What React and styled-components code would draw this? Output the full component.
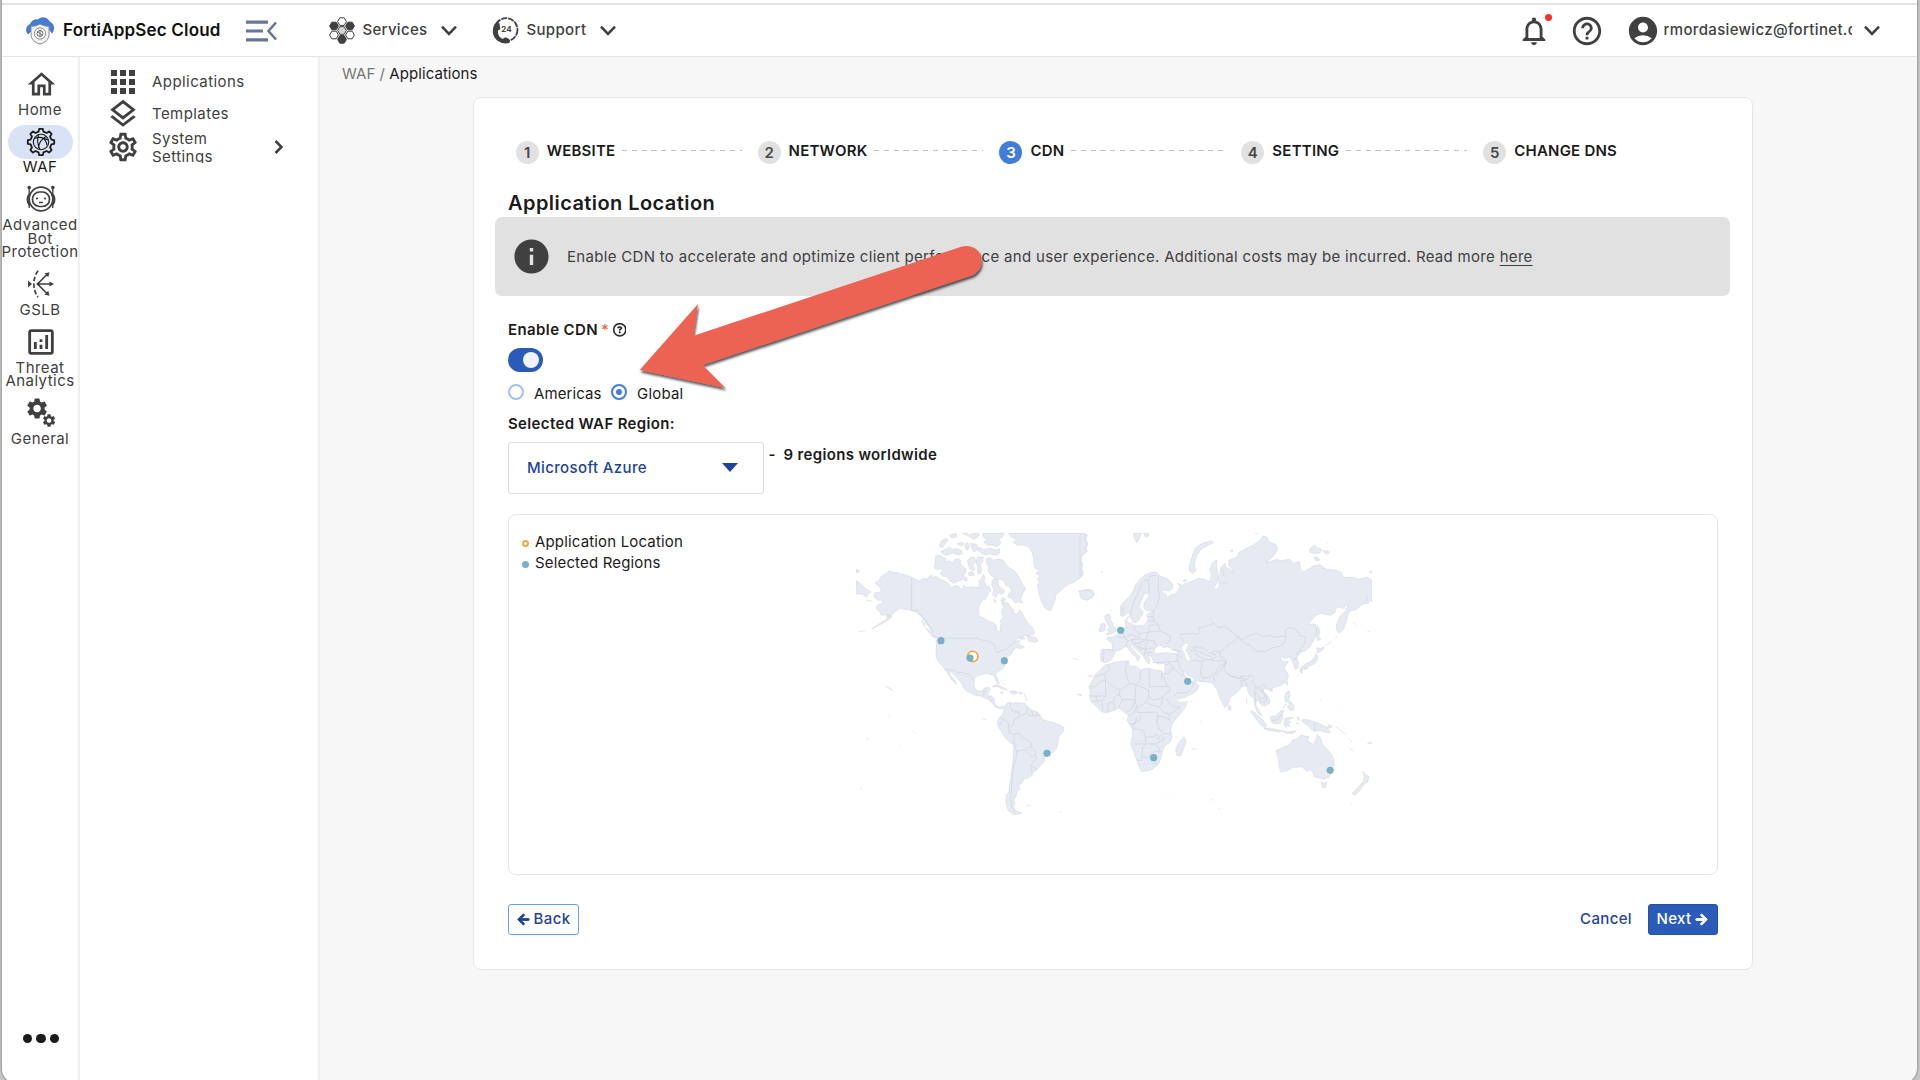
import React from "react";
import styled, { createGlobalStyle } from "styled-components";
import {
  MdOutlineHome,
  MdApps,
  MdOutlineLayers,
  MdOutlineSettings,
  MdSettings,
  MdOutlineAnalytics,
  MdNotificationsNone,
  MdHelpOutline,
  MdAccountCircle,
  MdInfo,
} from "react-icons/md";
import { FaArrowLeft, FaArrowRight } from "react-icons/fa";
import { FaRegCircleQuestion } from "react-icons/fa6";

const GlobalStyle = createGlobalStyle`
  *, *::before, *::after { box-sizing: border-box; }
  body {
    margin: 0;
    background: #c6c6c6;
    font-family: Inter, "Liberation Sans", sans-serif;
    font-size: 15px;
    line-height: 20px;
    color: #1b1b1b;
  }
  svg { display: block; flex: none; }
`;

const Screen = styled.div`
  position: relative;
  width: 1920px;
  height: 1080px;
  overflow: hidden;
`;

const Window = styled.div`
  width: 1915px;
  height: 1084px;
  margin-left: 2px;
  display: flex;
  flex-direction: column;
  background: #f7f7f7;
  border-radius: 0 0 16px 16px;
  box-shadow: 0 0 0 1.5px #a8a8a8;
  overflow: hidden;
`;

const TitleStrip = styled.div`
  height: 5px;
  background: #fff;
  border-bottom: 2px solid #e2e2e2;
`;

const Header = styled.header`
  height: 52px;
  display: flex;
  align-items: center;
  background: #fff;
  border-bottom: 1px solid #e4e4e4;
  color: #404040;
`;

const Brand = styled.div`
  display: flex;
  align-items: center;
  width: 320px;
  padding-left: 22px;
`;

const BrandName = styled.span`
  width: 183px;
  margin: -2px 0 0 8px;
  font-size: 17px;
  font-weight: 600;
  letter-spacing: 0.18px;
  color: #111;
`;

const HeaderMenu = styled.div`
  display: flex;
  align-items: center;
  margin-left: ${(p) => p.$offset}px;
`;

const HeaderLabel = styled.span`
  margin: -2px ${(p) => p.$gap}px 0 ${(p) => p.$lead}px;
  font-weight: 500;
  letter-spacing: ${(p) => p.$track}px;
  width: ${(p) => p.$width};
  overflow: hidden;
  white-space: nowrap;
`;

const HeaderTools = styled.div`
  display: flex;
  align-items: center;
  margin-left: auto;
  padding-right: 37px;
`;

const Bell = styled.div`
  position: relative;
  margin-right: 19px;
`;

const BellDot = styled.span`
  position: absolute;
  top: 0;
  right: -1px;
  width: 7px;
  height: 7px;
  border-radius: 50%;
  background: #f0342a;
`;

const Body = styled.div`
  flex: 1;
  display: flex;
`;

const Rail = styled.nav`
  width: 78px;
  padding: 10px 0 0;
  display: flex;
  flex-direction: column;
  gap: 8.5px;
  background: #fff;
  border-right: 2px solid #efefef;
  color: #404040;
`;

const RailItem = styled.div`
  display: flex;
  flex-direction: column;
  align-items: center;
  gap: 1.6px;
  color: ${(p) => (p.$active ? "#1b1b1b" : "#404040")};
`;

const RailIcon = styled.div`
  width: 65px;
  height: 34px;
  padding-left: 2px;
  display: flex;
  align-items: center;
  justify-content: center;
  border-radius: 17px;
  background: ${(p) => (p.$active ? "#d9e3f5" : "transparent")};
`;

const RailLabel = styled.div`
  width: 90px;
  text-align: center;
  line-height: 13.6px;
  letter-spacing: 0.45px;
  white-space: pre-line;
`;

const RailMore = styled.div`
  margin-top: auto;
  display: flex;
  justify-content: center;
  gap: 4.3px;
  padding: 0 0 41px 2px;

  span {
    width: 9.4px;
    height: 9.4px;
    border-radius: 50%;
    background: #1b1b1b;
  }
`;

const SideNav = styled.nav`
  width: 240px;
  padding-top: 7px;
  background: #fff;
  border-right: 2px solid #efefef;
  color: #404040;
`;

const SideItem = styled.div`
  height: 32.8px;
  padding: 0 35px 0 26px;
  display: grid;
  grid-template-columns: 34px 1fr auto;
  column-gap: 12px;
  align-items: center;
  justify-items: start;
`;

const SideIcon = styled.div`
  width: 34px;
  display: flex;
  justify-content: center;
`;

const SideLabel = styled.span`
  width: 100px;
  max-height: 33px;
  overflow: hidden;
  line-height: 17.4px;
  letter-spacing: 0.43px;
  white-space: pre-line;
`;

const Main = styled.main`
  flex: 1;
`;

const Breadcrumb = styled.div`
  padding: 7px 0 0 22px;
  height: 40px;
  letter-spacing: 0.06px;
  color: #757575;

  b {
    font-weight: 400;
    color: #1b1b1b;
  }
`;

const Card = styled.section`
  width: 1279.5px;
  height: 873px;
  margin-left: 153px;
  padding: 43px 34px 0;
  background: #fff;
  border: 1px solid #e5e5e5;
  border-radius: 8px;
`;

const Steps = styled.div`
  display: grid;
  grid-template-columns: repeat(5, 241.9px);
  padding-left: 7.7px;
  height: 50px;
  align-items: start;
`;

const Step = styled.div`
  display: flex;
  align-items: center;
  padding-right: 16px;
`;

const StepNumber = styled.span`
  width: 23px;
  height: 23px;
  margin-right: 8px;
  border-radius: 50%;
  text-align: center;
  line-height: 23px;
  font-weight: 600;
  color: ${(p) => (p.$active ? "#fff" : "#474747")};
  background: ${(p) => (p.$active ? "#437ddc" : "#e1e1e1")};
`;

const StepLabel = styled.span`
  margin-top: -4px;
  font-weight: 600;
  letter-spacing: 0.22px;
  white-space: nowrap;
`;

const StepDash = styled.span`
  flex: 1;
  height: 1.5px;
  margin: -4px 0 0 7px;
  background: repeating-linear-gradient(90deg, #c0c0c0 0 5.2px, transparent 5.2px 9.8px);
`;

const Title = styled.h2`
  margin: 0;
  height: 26px;
  font-size: 20px;
  line-height: 24px;
  font-weight: 600;
  letter-spacing: 0.43px;
`;

const Notice = styled.div`
  height: 79px;
  margin: 0 -13px;
  padding-left: 16px;
  display: flex;
  align-items: center;
  gap: 15px;
  width: 1235px;
  border-radius: 7px;
  background: #e1e1e1;
  color: #404040;
  letter-spacing: 0.31px;

  u {
    text-underline-offset: 3px;
    text-decoration-thickness: 1.4px;
  }
`;

const FieldLabel = styled.div`
  display: flex;
  align-items: center;
  margin-top: ${(p) => p.$top}px;
  height: 20px;
  font-weight: 600;
  letter-spacing: ${(p) => p.$track}px;

  svg {
    margin-left: 3.5px;
    stroke: currentColor;
    stroke-width: 14px;
  }
`;

const Required = styled.span`
  margin: -1px 0 0 3px;
  font-weight: 500;
  color: #ea6a3c;
`;

const Switch = styled.div`
  width: 35px;
  height: 23.5px;
  margin-top: 8px;
  padding-right: 4px;
  display: flex;
  align-items: center;
  justify-content: flex-end;
  border-radius: 12px;
  background: #2a5bb8;
`;

const Knob = styled.span`
  width: 16px;
  height: 16px;
  border-radius: 50%;
  background: #eef3ff;
`;

const RadioGroup = styled.div`
  display: flex;
  margin-top: 12px;
  height: 20px;
`;

const RadioOption = styled.label`
  display: flex;
  align-items: center;
  width: ${(p) => p.$width}px;
  letter-spacing: ${(p) => p.$track}px;
`;

const RadioMark = styled.span`
  width: 16px;
  height: 16px;
  margin: -3px 10px 0 0;
  display: grid;
  place-items: center;
  border-radius: 50%;
  border: 2px solid ${(p) => (p.$checked ? "#437ddc" : "#a4c0f0")};

  &::after {
    content: "";
    width: 6px;
    height: 6px;
    border-radius: 50%;
    background: ${(p) => (p.$checked ? "#437ddc" : "transparent")};
  }
`;

const RegionRow = styled.div`
  display: flex;
  align-items: flex-start;
  margin-top: 8.5px;
`;

const Select = styled.div`
  width: 255.5px;
  height: 51.5px;
  padding: 0 25px 0 18px;
  display: flex;
  align-items: center;
  justify-content: space-between;
  border: 1.4px solid #dedede;
  border-radius: 3px;
  color: #1d439c;
  font-weight: 500;
  letter-spacing: 0.37px;
`;

const Caret = styled.span`
  border: solid transparent;
  border-width: 9px 8.5px 0;
  border-top-color: #1d439c;
`;

const RegionCount = styled.span`
  margin: 2.8px 0 0 5px;
  font-weight: 600;
  letter-spacing: 0.34px;
  white-space: pre;
`;

const RegionDash = styled.span`
  display: inline-block;
  width: 15px;
`;

const MapBox = styled.div`
  width: 1209.5px;
  height: 361px;
  margin-top: 20px;
  display: flex;
  border: 1px solid #e5e5e5;
  border-radius: 8px;
`;

const Legend = styled.div`
  width: 346.5px;
  padding: 17px 0 0 12.5px;
  display: flex;
  flex-direction: column;
`;

const LegendRow = styled.div`
  display: flex;
  align-items: center;
  height: 20.6px;
  letter-spacing: 0.16px;
`;

const LegendDot = styled.span`
  width: 7px;
  height: 7px;
  margin: 3px 6.5px 0 0;
  border-radius: 50%;
  border: 2px solid ${(p) => p.$edge};
  background: ${(p) => p.$fill};
`;

const WorldMap = styled.svg`
  margin-top: 18px;
`;

const Actions = styled.div`
  display: flex;
  align-items: center;
  width: 1209.5px;
  margin-top: 29px;
`;

const Button = styled.button`
  height: 31px;
  padding: 0;
  display: flex;
  align-items: center;
  justify-content: center;
  gap: ${(p) => p.$gap || 0}px;
  width: ${(p) => p.$width}px;
  font: 500 15px/20px Inter, "Liberation Sans", sans-serif;
  letter-spacing: 0.35px;
  border-radius: 3px;
  border: 1px solid ${(p) => p.$edge || "transparent"};
  background: ${(p) => p.$fill || "transparent"};
  color: ${(p) => p.$ink || "#1d439c"};

  svg {
    margin-top: 1px;
    stroke: currentColor;
    stroke-width: 34px;
  }
`;

const Spacer = styled.span`
  flex: 1;
`;

const Pointer = styled.svg`
  position: absolute;
  left: 630px;
  top: 235px;
`;

const Chevron = ({ w = 16, h = 11, d = "M1 1.600 L8 8.800 L15 1.600" }) => (
  <svg width={w} height={h} viewBox={`0 0 ${w} ${h}`} fill="none" stroke="#404040" strokeWidth="2.600">
    <path d={d} />
  </svg>
);

const BrandLogo = () => (
  <svg width="31" height="29" viewBox="24 15 31 29">
    <path d="M28 33c-2.600-3.500-1.500-8.500 2.500-9.700C31.500 19 36 18.500 38 19c2.500-3.500 10-3 11.500 2 4.500 1.500 5.500 7 2.500 11l-3-4-8-3-8 3z" fill="#437ddc" stroke="#35507f" strokeWidth=".6" />
    <path d="M40 23c3 1.800 6 2.300 9 2.300v8c0 5-4 8.700-9 9.700-5-1-9-4.700-9-9.700v-8c3 0 6-.5 9-2.300z" fill="#f3f3f3" stroke="#8a8a8a" strokeWidth="1" />
    <circle cx="40" cy="32.500" r="5.600" fill="#fff" stroke="#777" strokeWidth=".9" />
    <circle cx="40" cy="32.500" r="3" fill="none" stroke="#555" strokeWidth=".9" />
    <path d="M37.500 31l5 3M40 29.500v6" stroke="#555" strokeWidth=".8" />
  </svg>
);

const CollapseIcon = () => (
  <svg width="32" height="22" viewBox="0 0 32 22" fill="none" stroke="#66778f" strokeWidth="3.200">
    <path d="M0 2.200H22M0 11H17M0 19.800H22" />
    <path d="M30 2.500L22.500 11L30 19.500" strokeWidth="2.600" />
  </svg>
);

const hex = (cx, cy, r) =>
  [0, 1, 2, 3, 4, 5]
    .map((i) => `${cx + r * Math.cos((i * Math.PI) / 3)},${cy + r * Math.sin((i * Math.PI) / 3)}`)
    .join(" ");

const HEXES = [
  [13, 4.6, "#fff"],
  [5, 9, "#404040"],
  [21, 9, "#404040"],
  [13, 13.5, "#d6d6d6"],
  [5, 18, "#fff"],
  [21, 18, "#fff"],
  [13, 22.4, "#404040"],
];

const ServicesIcon = () => (
  <svg width="26" height="27" viewBox="0 0 26 27">
    {HEXES.map(([x, y, fill]) => (
      <polygon key={`${x}-${y}`} points={hex(x, y, 4.4)} fill={fill} stroke="#404040" strokeWidth="1" />
    ))}
  </svg>
);

const SupportIcon = () => (
  <svg width="27" height="27" viewBox="0 0 27 27">
    <circle cx="14" cy="12.700" r="11.500" fill="none" stroke="#404040" strokeWidth="1.800" strokeDasharray="6 1" />
    <path d="M5.500 4.500C-1 9 -1 20 7 24.500c2.500 2 6.500 2.500 10 1.500 1.500-1 1.200-3.300-.8-4.500l-3-1.200-2.600 1.700C7.500 20.500 5.500 17.500 6 13.500l2.300-1.200L7.500 6.500z" fill="#404040" />
    <text x="9.300" y="15.400" fontFamily="Inter, sans-serif" fontSize="8" fontWeight="700" fill="#404040">24</text>
  </svg>
);

const gearPath = (cx, cy, outer, inner, teeth) => {
  const pts = [];
  const step = (Math.PI * 2) / teeth;
  for (let i = 0; i < teeth; i += 1) {
    const a = i * step - Math.PI / 2;
    [
      [-0.3, inner],
      [-0.17, outer],
      [0.17, outer],
      [0.3, inner],
    ].forEach(([k, r]) => pts.push(`${(cx + r * Math.cos(a + k * step)).toFixed(2)} ${(cy + r * Math.sin(a + k * step)).toFixed(2)}`));
  }
  return `M${pts.join("L")}Z`;
};

const WafIcon = () => (
  <svg width="30" height="30" viewBox="0 0 30 30" fill="none" stroke="#1b1b1b" strokeWidth="1.800" strokeLinejoin="round">
    <path d={gearPath(15, 15, 13.3, 10.6, 8)} />
    <circle cx="15" cy="15" r="7.700" strokeWidth="1.100" />
    <path d="M8.500 11.500C13 9.500 18 10.500 22 13M12.500 8C11 13 11.500 18 14 22.300M20 9.500C15.500 12 13 16 12.500 21M21 18.500C20.500 14.500 18 11.500 15.500 10.500" strokeWidth="1.100" />
  </svg>
);

const BotIcon = () => (
  <svg width="30" height="28" viewBox="0 0 30 28" fill="none" stroke="#404040">
    <path d="M3.200 3v20M26.800 3v20" strokeWidth="1.300" />
    <circle cx="3.200" cy="2.600" r="1.800" fill="#404040" stroke="none" />
    <circle cx="26.800" cy="2.600" r="1.800" fill="#404040" stroke="none" />
    <path d="M4.500 9C.6 11 .6 18 4.500 20.500M25.500 9C29.400 11 29.400 18 25.500 20.500" strokeWidth="2" />
    <circle cx="15" cy="14" r="11.800" strokeWidth="1.700" />
    <rect x="6.500" y="7" width="17" height="14.500" rx="7" strokeWidth="1.700" />
    <path d="M13 17.500h4" strokeWidth="1.500" />
    <circle cx="11" cy="13.500" r="1.100" fill="#404040" stroke="none" />
    <circle cx="19" cy="13.500" r="1.100" fill="#404040" stroke="none" />
  </svg>
);

const GslbIcon = () => (
  <svg width="28" height="28" viewBox="0 0 28 28" fill="none" stroke="#404040" strokeWidth="1.700">
    <path d="M11 .8C5.500 8 5.500 20 11 27.200" strokeDasharray="4.500 2.200" />
    <path d="M10.500 14H23M10.500 14L20.500 4M10.500 14L20.500 24" />
    <path d="M22.500 11.600L27 14l-4.500 2.400zM17.500 3.500l5-1.200-1.200 5zM17.500 24.500l5 1.200-1.200-5zM1 10.500l4 3.500-4 3.500zM9 14l3.500-2.600v5.200z" fill="#404040" stroke="none" />
  </svg>
);

const GearsIcon = () => (
  <svg width="30" height="30" viewBox="0 0 30 30">
    <g transform="translate(-1.400 -2)"><MdSettings size={25} color="#404040" /></g>
    <g transform="translate(15.300 14.700)"><MdSettings size={15.5} color="#404040" /></g>
  </svg>
);

/* Coastlines and borders; each hemisphere is drawn on its own 3x grid. */
const WEST_LAND = [
  "M150 153L162 158 172 157 186 163 200 166 215 172 226 177 238 184 246 176 262 177 268 170 275 165 276 174 288 168 292 174 306 180 318 186 327 192 329 200 336 203 345 197 355 198 363 208 370 203 372 195 380 203 400 200 415 204 418 196 417 182 424 176 430 163 434 172 432 185 438 195 437 205 447 197 452 210 444 222 437 236 428 240 420 252 416 264 416 284 424 292 436 297 447 305 463 309 469 318 471 330 477 336 482 334 480 322 485 310 480 305 490 290 485 275 490 262 487 250 495 248 505 250 513 262 520 270 522 280 532 283 538 270 545 275 553 293 557 300 565 312 575 320 582 332 583 340 570 348 550 347 535 354 524 364 540 362 536 370 545 378 553 380 547 384 536 386 530 382 518 392 515 402 503 410 495 418 493 430 494 440 485 448 472 455 467 466 472 476 475 484 476 493 471 488 466 478 463 467 455 464 440 460 428 463 415 466 405 472 402 484 402 498 406 508 416 514 427 512 432 505 446 502 450 506 445 518 442 525 448 528 458 530 463 538 462 548 468 557 478 562 488 558 492 563 484 566 474 564 465 560 455 548 448 541 440 536 430 532 418 527 405 526 390 518 378 512 370 503 368 494 358 482 348 470 336 458 326 450 330 465 342 478 350 492 345 490 335 478 326 466 320 455 315 448 305 436 296 425 291 415 288 402 289 385 290 372 288 362 294 355 280 347 275 335 268 322 258 313 252 302 246 292 238 284 228 276 215 272 203 268 190 267 180 264 172 270 165 275 155 284 155 291 146 299 130 309 118 315 98 325 115 313 132 303 145 292 147 287 138 283 124 286 120 275 110 268 110 258 118 252 128 250 127 240 115 241 102 231 104 218 120 218 125 210 118 200 105 188 118 180 124 170 138 160Z",
  "M48 182L60 190 75 205 92 215 84 222 80 232 65 222 48 222Z",
  "M48 148l10 4 -3 6 -7 0Z",
  "M56 335l20 -3M95 326l8 -3M80 240l12 2 4 3M138 286l12 -2 3 5 -9 4Z",
  "M245 300l5 14 6 8 -6 -12ZM258 325l8 4 14 16 10 9 -12 -4 -12 -14Z",
  "M287 108L300 106 310 112 318 116 312 128 325 122 336 128 345 118 355 116 362 122 360 132 370 140 378 148 376 160 368 165 382 175 380 184 368 178 352 184 342 190 330 184 322 170 308 168 300 160 308 150 302 145 292 150 283 143 286 130Z",
  "M382 122L392 112 404 112 406 124 398 136 405 148 396 152 388 142Z",
  "M412 112L430 112 428 124 420 134 426 150 420 162 412 158 414 140 408 128Z",
  "M390 155l10 2 2 9 -12 2 -6 -6Z",
  "M440 115L452 113 460 120 478 117 490 122 498 135 512 146 525 154 535 168 542 180 548 195 556 206 552 214 546 222 543 240 548 250 535 246 525 248 515 236 503 230 508 220 516 212 508 200 498 196 494 185 484 178 470 180 462 172 452 165 444 152 448 142 440 132Z",
  "M456 182l10 -6 8 8 2 14 10 8 8 6 -6 10 -12 -4 -8 14 -10 -8 4 -14 -6 -14Z",
  "M482 240l8 -8 6 8 -8 10Z M462 238l6 4 -4 6Z",
  "M428 40H492L488 50 475 58 484 68 470 80 455 74 440 76 432 66 442 58 430 52Z",
  "M412 88L420 82 430 90 450 84 465 90 478 86 480 98 470 106 450 102 430 104Z",
  "M298 78L305 62 318 55 324 60 316 70 306 84Z",
  "M303 94L318 88 328 80 336 88 350 86 364 92 366 102 350 104 338 98 322 106 308 102Z",
  "M328 46L348 40 350 50 336 54ZM352 72l14 -6 6 6 -10 6ZM376 72l8 -4 4 12 -6 10 -6 -6ZM392 70l18 4 6 12 -14 10 -6 -10ZM368 40l14 0 6 6 14 -6 14 0 0 8 -14 10 -12 -8Z",
  "M505 40H730L742 44 737 60 744 70 738 84 742 94 735 100 725 108 722 120 727 132 722 145 730 155 727 168 712 180 700 188 685 193 670 205 655 218 648 224 645 240 637 260 632 272 618 266 610 255 603 240 598 225 595 210 592 195 600 185 592 178 600 168 588 160 598 150 585 145 582 130 580 110 576 95 566 82 550 74 532 76 520 66 530 58 515 52Z",
  "M715 213L728 212 740 208 755 210 763 220 758 230 742 240 728 236 722 228 730 224 720 220Z",
  "M560 345l10 6 16 0 8 12 -10 4 -18 -4Z M536 352l16 0 4 4 -14 2Z",
  "M457 500L468 494 482 498 496 506 502 510 490 508 474 500Z",
  "M508 514L520 512 532 516 530 521 516 521ZM482 516l8 1 -6 4ZM538 517l10 1 -2 4 -8 -1Z",
  "M482 480l4 6M490 490l6 8M552 522l6 10 2 12M135 498l8 4 12 6 2 5M428 597l10 2M78 655l8 3M218 632l8 8M700 415l14 5M712 522l12 2 -4 6M748 470l14 -3M560 856l12 1M658 874l8 4M145 588l3 2M178 672l3 2M60 806l6 0M784 156l4 1M46 670l3 2",
  "M492 563L500 550 512 546 516 552 525 548 540 549 555 550 562 560 575 570 590 575 600 585 606 597 620 603 640 608 660 615 671 622 670 634 660 645 655 655 652 675 648 688 640 696 628 700 615 710 612 725 600 738 588 752 580 755 575 767 565 774 550 776 548 788 535 795 540 808 530 815 528 830 520 840 525 850 520 860 525 872 545 879 530 885 518 882 505 872 500 860 498 840 500 825 507 815 508 800 512 780 514 760 518 735 520 710 521 690 522 675 508 665 495 652 485 635 475 620 472 605 478 593 488 585 492 572Z",
];

const WEST_BORDERS = [
  "M215 172V272",
  "M294 355H412L418 358 432 361 447 364 460 371 466 380 466 392 472 398 488 390 497 388 508 379 520 372 526 364",
  "M215 270L228 272 240 282 252 295 262 308 272 322 280 335",
  "M315 448L328 449 345 452 354 459 368 456 376 462 385 460 393 470 402 482",
  "M427 530L432 520 430 514 440 514M440 532L452 528M448 541L462 538M466 556L474 562",
  "M512 548L510 560 520 575 537 576 540 588 522 600 520 614",
  "M520 614L506 620 508 638 522 642",
  "M522 642L540 640 545 652 560 660 573 668 575 682 565 682 556 690 530 694 522 672",
  "M522 642V672M575 682L585 692 586 704 578 712 560 694",
  "M586 704L590 714 572 736 576 756M572 736L592 748",
  "M530 694L528 716 520 740 516 780 512 830 515 862 526 874",
  "M562 560L560 578 545 588 540 588M575 570L578 588 562 584M590 575L590 587 578 588M602 584L596 588 590 587",
  "M478 593L492 598 482 612 476 616M492 598L503 606 508 620",
];

const EAST_LAND = [
  "M0 40H10L18 45 14 60 20 72 14 84 18 94 8 102 4 112 2 125 8 138 4 150 8 160 0 172Z",
  "M0 213L14 210 20 214 35 210 43 222 38 232 22 240 6 236 0 230Z",
  "M122 288L122 258 135 242 150 228 160 212 165 197 180 178 195 165 212 158 228 156 236 166 250 172 265 178 278 192 278 206 265 213 250 210 246 216 258 225 262 237 270 226 285 222 296 210 300 200 293 190 308 198 312 192 325 188 345 180 355 175 375 178 390 186 394 165 390 148 398 128 410 120 410 145 414 165 410 190 400 206 412 208 418 196 414 176 420 158 424 140 436 130 436 140 452 150 462 165 456 148 446 138 448 120 472 112 476 98 500 85 520 75 540 62 548 48 562 52 565 65 588 74 592 90 580 108 562 125 556 130 590 118 600 122 630 118 640 130 658 125 662 148 670 156 685 148 700 138 720 134 740 148 765 150 785 158 790 172 820 172 835 178 860 172 875 180V246L860 232 868 248 850 252 835 262 825 270 810 272 802 288 800 302 792 325 778 340 770 330 770 312 780 290 798 272 806 250 790 265 770 260 765 278 750 286 725 280 708 285 690 305 684 313 705 312 711 330 708 345 700 362 690 380 676 392 664 395 655 405 650 415 655 430 655 444 645 447 640 430 635 418 626 410 612 418 610 408 600 414 610 425 625 425 618 435 612 445 622 458 625 470 618 485 605 495 590 500 575 505 562 508 553 506 548 515 560 525 570 540 568 550 555 558 545 556 540 546 532 540 526 548 530 562 540 575 546 588 535 580 528 568 523 550 522 532 512 528 505 518 502 502 495 497 484 502 476 512 462 524 450 532 446 550 435 562 426 545 418 530 412 508 404 500 400 490 385 486 362 484 345 482 338 470 325 468 316 458 309 450 312 464 325 478 330 486 342 482 357 498 350 512 335 522 315 532 290 538 283 530 276 515 262 498 252 478 247 468 254 455 256 436 252 430 235 432 220 424 216 410 204 404 210 418 207 432 197 422 190 408 178 396 165 384 155 374 150 376 160 390 172 402 180 410 174 424 168 410 155 400 145 386 138 378 125 388 112 392 103 398 100 410 88 424 75 428 63 423 62 404 66 388 80 388 98 390 96 370 82 358 82 352 98 352 110 344 120 338 130 328 138 320 136 304 142 292 150 290 148 306 155 314 170 318 190 316 202 306 204 292 200 284 210 278 222 272 200 272 192 264 192 250 198 240 208 228 202 218 192 222 186 238 180 250 178 262 190 276 182 290 175 302 164 308 157 298 152 284 144 278 134 288Z",
  "M78 285L88 282 92 292 90 300 98 308 100 318 108 328 104 336 92 342 78 344 88 336 80 330 90 322 84 315 78 303 74 292Z",
  "M62 314L72 309 77 318 73 332 60 336 56 328 62 322Z",
  "M395 62L400 68 380 78 362 88 352 104 345 122 342 136 348 152 338 160 328 152 328 136 334 118 340 98 348 82 368 70Z",
  "M160 40H184L178 55 170 68 164 56ZM190 40L206 40 206 48 198 53Z",
  "M690 86L704 76 712 84 724 88 720 98 700 100 690 96ZM728 92l14 0 8 6 -12 4ZM702 112l10 0 6 8 -10 2ZM525 40l10 0M740 68l6 3M868 158l8 -6 0 6Z",
  "M312 178l8 2 -4 6 -6 -2Z M450 92l8 -2 0 5Z M420 185l10 6 10 -4 -2 10M424 150l8 4 -2 14",
  "M712 316L719 332 716 350 722 358 712 362 709 340Z",
  "M710 384L722 386 732 380 728 390 714 398Z",
  "M708 400L714 412 706 430 690 436 680 446 662 444 676 432 692 424 704 412ZM660 448l8 0 -2 12 -6 -4Z M672 444l10 0 -6 6Z",
  "M735 378l10 -6 10 -8M765 355l8 -8M820 310l8 3M862 332l8 5",
  "M620 486l4 -2 -2 12 -4 -4ZM568 508l9 -1 0 6 -7 1Z",
  "M620 516L628 514 630 528 624 540 634 546 640 556 642 568 632 572 622 560 630 552 616 544 614 530ZM612 560l6 -8 -10 14",
  "M445 554l8 8 -1 8 -6 0Z",
  "M511 572L522 576 540 592 552 604 560 616 554 622 540 612 526 594Z",
  "M552 624L572 625 590 629 604 632 600 636 575 632 556 629Z",
  "M572 590L588 588 600 574 612 570 606 584 608 596 600 610 584 612 574 606Z",
  "M615 596L630 592 640 594 622 600 632 606 624 610 630 620 620 614 618 622 612 614ZM605 632l18 4 24 -4 -8 8 -20 0ZM652 590l6 4 -2 8ZM648 610l12 2",
  "M664 600L676 598 690 602 704 606 722 612 738 622 752 638 740 638 722 632 704 634 694 628 684 616 672 610Z",
  "M744 614l12 4 -4 6 -12 0M768 620l12 10 16 12M806 656l10 10M806 682l14 10M862 672l10 -6 2 4Z",
  "M75 436L100 428 125 424 146 422 148 438 170 440 182 450 204 444 222 450 245 452 250 470 258 488 268 508 275 525 286 540 302 548 322 545 316 562 302 580 288 596 276 612 272 630 276 650 272 664 255 678 247 692 244 712 235 732 220 746 205 752 184 755 178 742 170 720 163 700 152 672 158 648 158 630 148 612 142 600 145 586 130 574 116 564 100 572 80 578 64 575 50 560 35 546 28 532 31 515 27 500 36 485 46 465 60 450Z",
  "M312 650L318 664 310 688 302 708 290 706 287 690 296 668Z",
  "M590 700L588 692 610 682 628 676 636 662 652 656 662 646 686 650 682 662 700 674 708 660 712 643 722 655 726 672 738 685 752 700 760 715 762 735 756 750 748 770 733 777 718 774 704 770 698 756 690 748 682 754 665 740 640 742 620 752 602 757 598 740 596 718Z",
  "M724 786L732 790 740 787 736 802 728 803Z",
  "M848 754L856 764 867 770 862 786 848 794 850 780 853 770Z",
  "M846 788L852 794 840 810 825 826 816 820 832 804Z",
  "M64 157l5 -2M70 252l4 1M92 270l4 2M22 468l12 -2M0 522l4 4M330 545l8 -3M335 688l14 -3M285 650l6 2M395 838l8 3M262 824l4 0M415 865l4 1M720 540l4 -2M780 566l2 2M812 850l4 1M500 535l0 18M650 470l6 -6M360 602l3 4M130 592l2 6",
];

const EAST_SEAS = [
  "M225 385L235 376 248 378 250 384 262 380 280 390 296 396 290 402 262 398 240 400 226 402 222 394Z",
  "M305 378L318 368 328 372 322 382 318 392 326 402 330 412 332 424 322 424 314 412 312 398 304 388Z",
  "M138 298L148 292 150 284 154 296 160 308 148 310Z",
];

const EAST_BORDERS = [
  "M122 270L130 262 128 285M152 284L156 262 165 240 175 215 185 190 195 180 205 182 208 220M205 182L212 168 228 166 236 176 234 200 238 230 232 256 222 272",
  "M222 272L220 290 222 304 236 315 240 332 260 342 272 350 270 364 258 372M204 304L222 304M200 290L220 290",
  "M236 315L210 316 206 336 180 342 164 330 162 318M206 336L240 334M206 336L200 350 196 360 222 362 230 380",
  "M120 330L130 338 132 352 144 362 162 358 180 356 196 360M130 352L110 350M144 362L138 378M132 352L150 344 164 348M156 358L160 370 178 368 196 360",
  "M178 368L180 382 196 388 214 384 224 384M196 388L192 408M196 398L214 398M80 388L100 392M72 390L70 424M164 370L176 386",
  "M204 364L198 376 196 388M222 362L228 376M180 342L176 352 164 348M172 380L186 392",
  "M278 388L296 392 306 398M292 398L300 410 306 412M288 402L292 412 296 428 300 445 310 455M218 428L262 426 286 424 294 424",
  "M256 436L268 430 282 445 300 462 310 466M252 462L262 462 272 450 282 445M282 530L290 520 320 518 335 505 342 492 330 486",
  "M304 354L302 342 322 342 340 340 352 344 360 334 355 325 380 318 402 310 414 322 436 320 452 334 474 350 462 365 446 372 432 388 420 396",
  "M304 354L312 366M342 378L342 390 360 396 374 402 392 410 398 420 410 408 396 398 404 392 420 396 420 408 436 416 438 430",
  "M342 390L330 392M332 424L346 420 364 424 368 432 362 450 364 470 374 474 362 484M364 424L380 418 398 420 410 424 430 420 438 430 416 440 408 456 392 470 374 474",
  "M342 378L356 384 372 384 386 398 400 402M346 400L362 412 374 418",
  "M474 350L488 360 510 346 530 340 548 350 570 346 590 352 610 348 618 352 616 366 600 378 578 384 556 394 530 394 512 378 488 366 474 350",
  "M618 352L616 330 630 322 646 328 662 348 678 352 672 374 660 390 664 395M646 405L662 392M640 418L654 414",
  "M438 430L432 444 440 460 456 470 476 476 484 468 500 470 516 466 524 476 518 486 528 500 536 502 550 494 562 506",
  "M440 460L452 468 484 476 484 468M404 484L400 470 416 456 430 440 436 430M484 476L500 478 510 470M486 498L482 482 496 482 502 500",
  "M528 500L522 512 526 530 528 548M528 500L540 512 552 520 554 534 540 536 534 522 524 516M540 500L548 512 560 528 558 545 548 548M540 536L542 550M576 602L592 600 600 588 608 584M704 606V634",
  "M86 434L90 448 74 462 46 470M74 462L76 480 58 486 50 498 28 502M76 480L100 500 120 510 150 490 140 470 136 450 142 424M150 490L168 494 206 510M208 446L208 500 262 500M168 494L180 482 182 450",
  "M120 510L118 524 104 530 100 545M76 480L78 528 48 528 28 528M48 528L52 545 36 545M52 545L66 540 78 528M66 540L68 572M100 545L84 550 84 576M100 545L104 568M118 524L126 540 116 562M126 540L142 538 165 540 166 520 168 494",
  "M165 540L160 556 148 574 138 572M165 540L170 560 160 582 145 586M206 510L206 530 198 548 180 558 170 560M206 530L218 540 248 534 244 556 236 560 218 556 204 550",
  "M248 534L258 518 270 514M258 534L270 552 280 560 300 562 284 574 268 582 250 576 236 560M268 582L268 600 274 610",
  "M170 576L182 578 230 576 234 590 230 606 238 626 250 640 270 642M182 578L180 600 160 610 160 626M160 626L190 632 196 650 198 672 160 672M196 650L220 652 226 642 238 650 232 660M230 606L234 590 252 590 268 600",
  "M198 672L188 680 186 710 184 722 170 720M188 710L204 714 214 700 226 694 240 696M204 672L226 672 240 666 250 662 244 644M226 672L236 684 240 696M218 734L228 728 234 736M250 662L254 652",
  "M170 560L172 576M245 455L245 484M148 612L166 610 170 590",
];

const WEST_PINS = [[303, 362], [493, 422], [621, 700]];
const EAST_PINS = [[122, 331], [323, 484], [221, 713], [750.5, 751]];

const World = () => (
  <WorldMap width="516" height="282" viewBox="856 533 516 282">
    <g transform="translate(840 520) scale(.33333)" fill="#e6eaf3" stroke="#d6dae2" strokeWidth="2" strokeLinejoin="round">
      <path d={WEST_LAND.join("")} />
      <path d={WEST_BORDERS.join("")} fill="none" stroke="#cdd1da" />
    </g>
    <g transform="translate(1080 520) scale(.33333)" fill="#e6eaf3" stroke="#d6dae2" strokeWidth="2" strokeLinejoin="round">
      <path d={EAST_LAND.join("")} />
      <path d={EAST_SEAS.join("")} fill="#fff" />
      <path d={EAST_BORDERS.join("")} fill="none" stroke="#cdd1da" />
    </g>
    <g fill="#78b0c7">
      <circle cx="972.700" cy="656.400" r="5.200" fill="#fff" stroke="#f1a73c" strokeWidth="1.600" />
      <circle cx="970" cy="658" r="3.600" />
      {WEST_PINS.map(([x, y]) => (
        <circle key={x} cx={840 + x / 3} cy={520 + y / 3} r="3.600" />
      ))}
      {EAST_PINS.map(([x, y]) => (
        <circle key={x} cx={1080 + x / 3} cy={520 + y / 3} r="3.600" />
      ))}
    </g>
  </WorldMap>
);

const RAIL = [
  ["Home", <MdOutlineHome size={33} />],
  ["WAF", <WafIcon />],
  ["Advanced\nBot\nProtection", <BotIcon />],
  ["GSLB", <GslbIcon />],
  ["Threat\nAnalytics", <MdOutlineAnalytics size={34} />],
  ["General", <GearsIcon />],
];

const SIDE = [
  ["Applications", <MdApps size={36} />],
  ["Templates", <MdOutlineLayers size={34} />],
  ["System\nSettings", <MdOutlineSettings size={34} />],
];

const STEPS = ["WEBSITE", "NETWORK", "CDN", "SETTING", "CHANGE DNS"];

export default function App() {
  return (
    <Screen>
      <GlobalStyle />
      <Window>
        <TitleStrip />
        <Header>
          <Brand>
            <BrandLogo />
            <BrandName>FortiAppSec Cloud</BrandName>
            <CollapseIcon />
          </Brand>
          <HeaderMenu $offset={7}>
            <ServicesIcon />
            <HeaderLabel $lead={7.5} $gap={14} $track={0.3}>Services</HeaderLabel>
            <Chevron />
          </HeaderMenu>
          <HeaderMenu $offset={35}>
            <SupportIcon />
            <HeaderLabel $lead={7} $gap={13.5} $track={0.36}>Support</HeaderLabel>
            <Chevron />
          </HeaderMenu>
          <HeaderTools>
            <Bell>
              <MdNotificationsNone size={34} />
              <BellDot />
            </Bell>
            <MdHelpOutline size={34} />
            <HeaderMenu $offset={22.5}>
              <MdAccountCircle size={34} />
              <HeaderLabel $lead={3.5} $gap={12.5} $track={0.33} $width="188px">
                rmordasiewicz@fortinet.com
              </HeaderLabel>
              <Chevron />
            </HeaderMenu>
          </HeaderTools>
        </Header>
        <Body>
          <Rail>
            {RAIL.map(([label, icon]) => (
              <RailItem key={label} $active={label === "WAF"}>
                <RailIcon $active={label === "WAF"}>{icon}</RailIcon>
                <RailLabel>{label}</RailLabel>
              </RailItem>
            ))}
            <RailMore>
              <span />
              <span />
              <span />
            </RailMore>
          </Rail>
          <SideNav>
            {SIDE.map(([label, icon], i) => (
              <SideItem key={label}>
                <SideIcon>{icon}</SideIcon>
                <SideLabel>{label}</SideLabel>
                {i === 2 && <Chevron w={9} h={14} d="M1.500 1L7.500 7L1.500 13" />}
              </SideItem>
            ))}
          </SideNav>
          <Main>
            <Breadcrumb>
              WAF / <b>Applications</b>
            </Breadcrumb>
            <Card>
              <Steps>
                {STEPS.map((label, i) => (
                  <Step key={label}>
                    <StepNumber $active={i === 2}>{i + 1}</StepNumber>
                    <StepLabel>{label}</StepLabel>
                    {i < 4 && <StepDash />}
                  </Step>
                ))}
              </Steps>
              <Title>Application Location</Title>
              <Notice>
                <MdInfo size={41} />
                <span>
                  Enable CDN to accelerate and optimize client performance and user experience. Additional costs may
                  be incurred. Read more <u>here</u>
                </span>
              </Notice>
              <FieldLabel $top={24.2} $track={0.4}>
                Enable CDN<Required>*</Required>
                <FaRegCircleQuestion size={13.5} />
              </FieldLabel>
              <Switch>
                <Knob />
              </Switch>
              <RadioGroup>
                <RadioOption $width={103} $track={0.1}>
                  <RadioMark />
                  Americas
                </RadioOption>
                <RadioOption $width={90} $track={0.2}>
                  <RadioMark $checked />
                  Global
                </RadioOption>
              </RadioGroup>
              <FieldLabel $top={10} $track={0.35}>
                Selected WAF Region:
              </FieldLabel>
              <RegionRow>
                <Select>
                  Microsoft Azure
                  <Caret />
                </Select>
                <RegionCount>
                  <RegionDash>-</RegionDash>9 regions worldwide
                </RegionCount>
              </RegionRow>
              <MapBox>
                <Legend>
                  <LegendRow>
                    <LegendDot $edge="#f1a73c" $fill="#fff" />
                    Application Location
                  </LegendRow>
                  <LegendRow>
                    <LegendDot $edge="#78b0c7" $fill="#78b0c7" />
                    Selected Regions
                  </LegendRow>
                </Legend>
                <World />
              </MapBox>
              <Actions>
                <Button $width={71} $gap={4} $edge="#6c9cec">
                  <FaArrowLeft size={13} />
                  Back
                </Button>
                <Spacer />
                <Button $width={83}>Cancel</Button>
                <Button $width={70} $gap={4} $fill="#2a5bb8" $edge="#2350a8" $ink="#fff">
                  Next
                  <FaArrowRight size={13} />
                </Button>
              </Actions>
            </Card>
          </Main>
        </Body>
      </Window>
      <Pointer width="370" height="170" viewBox="630 235 370 170">
        <defs>
          <filter id="pointer-shadow" x="-5%" y="-5%" width="112%" height="118%">
            <feDropShadow dx="1" dy="2.500" stdDeviation="1" floodColor="#000" floodOpacity=".65" />
          </filter>
        </defs>
        <path
          d="M639.700 370L698 304L693.500 335.800L962 246.500C968 244.600 977 247 980.500 254.500C984 264 979.500 272.500 971 275.800L702.500 365L725.500 388Z"
          fill="#ec6453"
          filter="url(#pointer-shadow)"
        />
      </Pointer>
    </Screen>
  );
}
